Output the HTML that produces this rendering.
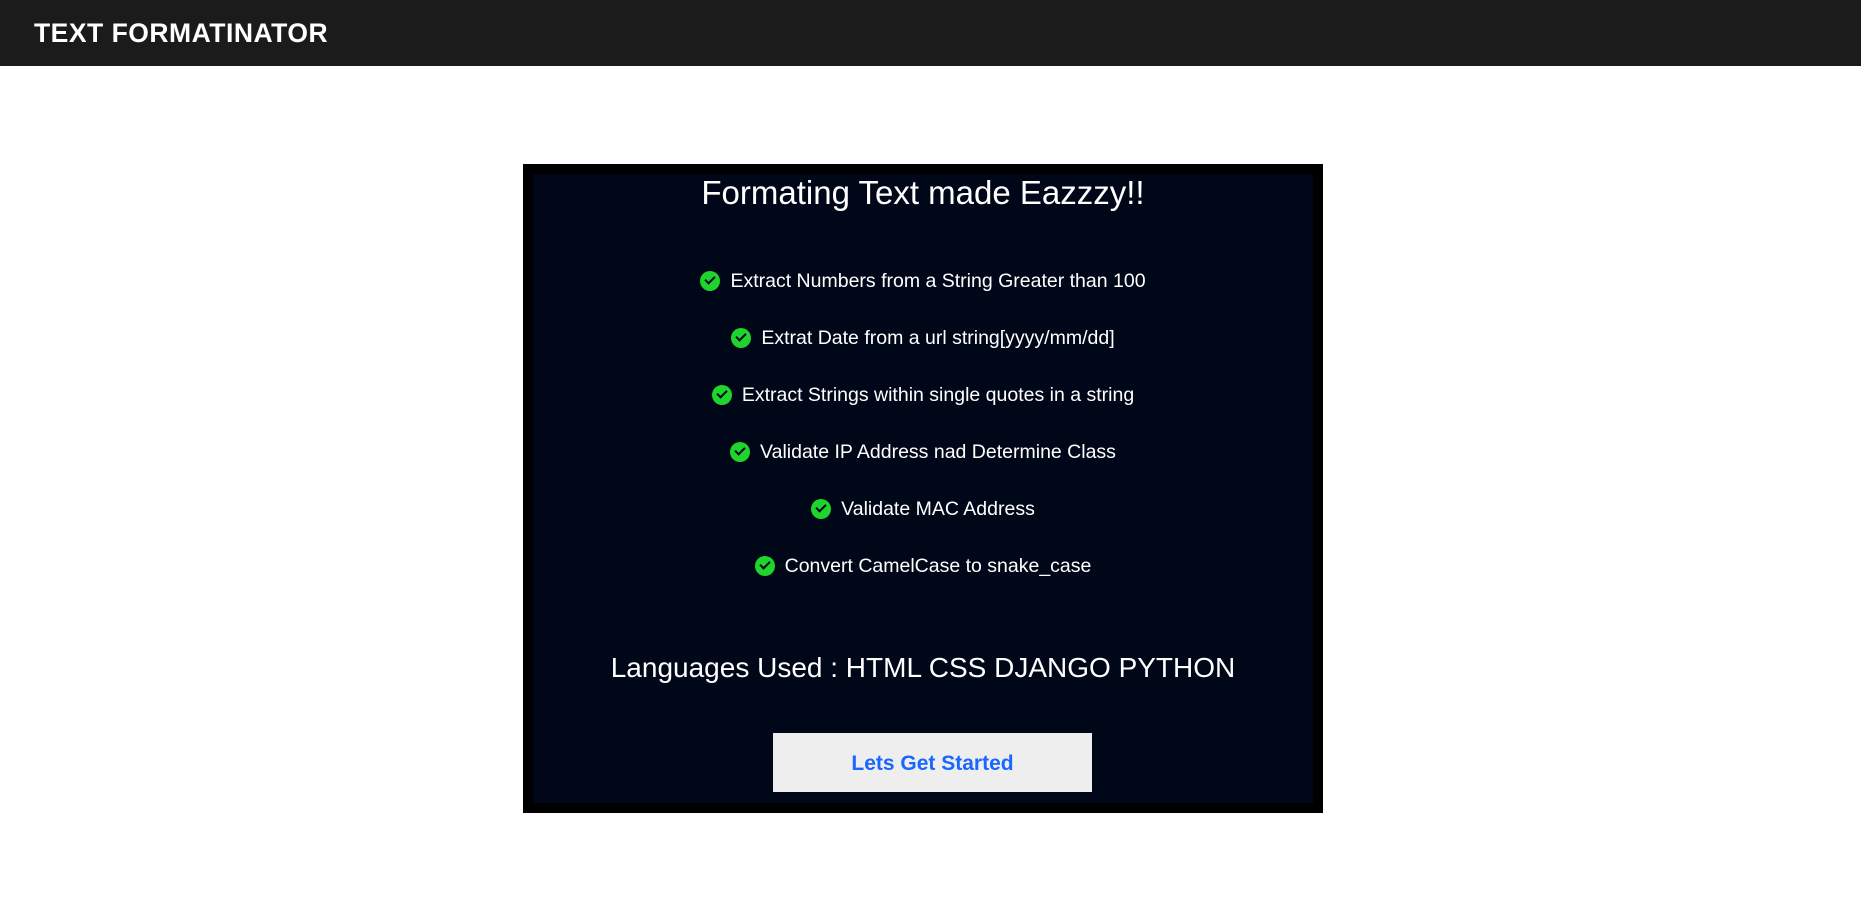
<!DOCTYPE html>
<html><head><meta charset="utf-8"><style>
*{margin:0;padding:0;box-sizing:border-box}
body{width:1861px;height:909px;background:#fff;font-family:"Liberation Sans",sans-serif;position:relative;overflow:hidden}
.hdr{position:absolute;left:0;top:0;width:1861px;height:66px;background:#1b1b1b}
.hdr span{position:absolute;left:34px;top:18px;color:#fff;font-weight:bold;font-size:26.5px;letter-spacing:0.5px}
.box{position:absolute;left:523px;top:164px;width:800px;height:649px;background:#000718;border:10px solid #000}
.t{position:absolute;left:0;width:100%;text-align:center;color:#fff}
.title{top:0px;font-size:33px}
.item{font-size:19.5px;display:flex;justify-content:center;align-items:center;height:24px}
.item i{display:inline-block;width:20px;height:20px;border-radius:50%;background:#1fd42c;margin-right:10px;position:relative}
.item i:after{content:"";position:absolute;left:5px;top:5px;width:8px;height:4px;border-left:2.5px solid #000718;border-bottom:2.5px solid #000718;transform:rotate(-45deg)}
.lang{top:478px;font-size:28px}
.btn{position:absolute;left:240px;top:559px;width:319px;height:59px;background:#eee;color:#1a66ff;font-weight:bold;font-size:21px;text-align:center;line-height:62px}
</style></head><body>
<div class="hdr"><span>TEXT FORMATINATOR</span></div>
<div class="box">
<div class="t title">Formating Text made Eazzzy!!</div>
<div class="t item" style="top:95px"><i></i>Extract Numbers from a String Greater than 100</div>
<div class="t item" style="top:152px"><i></i>Extrat Date from a url string[yyyy/mm/dd]</div>
<div class="t item" style="top:209px"><i></i>Extract Strings within single quotes in a string</div>
<div class="t item" style="top:266px"><i></i>Validate IP Address nad Determine Class</div>
<div class="t item" style="top:323px"><i></i>Validate MAC Address</div>
<div class="t item" style="top:380px"><i></i>Convert CamelCase to snake_case</div>
<div class="t lang">Languages Used : HTML CSS DJANGO PYTHON</div>
<div class="btn">Lets Get Started</div>
</div>
</body></html>
